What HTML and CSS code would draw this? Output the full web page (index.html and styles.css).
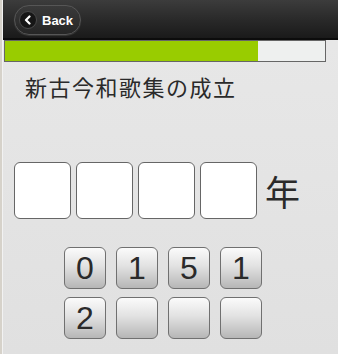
FILE: index.html
```html
<!DOCTYPE html>
<html lang="ja">
<head>
<meta charset="utf-8">
<title>新古今和歌集の成立</title>
<link rel="stylesheet" href="styles.css">
</head>
<body>
<div class="edge"></div>
<div class="app">
  <header class="header">
    <button class="back" type="button">
      <span class="back-icon">
        <svg width="10" height="10" viewBox="0 0 10 10"><path d="M6.5 1.5 L3 5 L6.5 8.5" fill="none" stroke="#fff" stroke-width="2.2" stroke-linecap="round" stroke-linejoin="round"/></svg>
      </span>
      <span class="back-label">Back</span>
    </button>
  </header>
  <div class="progress"><div class="progress-fill" style="width:253px"></div></div>
  <h1 class="title">新古今和歌集の成立</h1>
  <div class="answer">
    <div class="slot"></div>
    <div class="slot"></div>
    <div class="slot"></div>
    <div class="slot"></div>
    <span class="unit">年</span>
  </div>
  <div class="keypad">
    <button class="key" type="button">0</button>
    <button class="key" type="button">1</button>
    <button class="key" type="button">5</button>
    <button class="key" type="button">1</button>
    <button class="key" type="button">2</button>
    <button class="key" type="button"></button>
    <button class="key" type="button"></button>
    <button class="key" type="button"></button>
  </div>
</div>
</body>
</html>
```
FILE: styles.css
```css
html, body {
  margin: 0;
  padding: 0;
  height: 100%;
}
body {
  display: flex;
  background: #e3e3e3;
  font-family: "Liberation Sans", Arial, "Noto Sans CJK JP", sans-serif;
  overflow: hidden;
}
.edge {
  width: 2px;
  flex: none;
  background: #d6d2ca;
  border-right: 1px solid #f2f2f2;
}
.app {
  flex: 1;
  display: flex;
  flex-direction: column;
  background: linear-gradient(#e8e8e8, #e0e0e0);
}
.header {
  height: 38px;
  border-bottom: 2px solid #0c0c0c;
  background: linear-gradient(#3c3c3c, #2a2a2a 50%, #1a1a1a);
  display: flex;
  align-items: flex-start;
  padding: 5px 0 0 11px;
  box-sizing: border-box;
  height: 40px;
}
.back {
  display: flex;
  align-items: center;
  width: 67px;
  height: 30px;
  padding: 0 0 0 4px;
  box-sizing: border-box;
  border: 1px solid #565656;
  border-radius: 15px;
  background: linear-gradient(#3a3a3a, #262626);
  box-shadow: 0 1px 1px rgba(255,255,255,0.12);
  color: #fff;
  font-family: "Liberation Sans", Arial, sans-serif;
  font-weight: bold;
  font-size: 13px;
}
.back-icon {
  width: 18px;
  height: 18px;
  box-sizing: border-box;
  border-radius: 50%;
  background: #161616;
  border: 1px solid #4a4a4a;
  display: flex;
  align-items: center;
  justify-content: center;
}
.back-label {
  margin-left: 5px;
}
.progress {
  margin-left: 1px;
  width: 322px;
  height: 22px;
  box-sizing: border-box;
  border: 1px solid #666;
  background: #eef0ef;
}
.progress-fill {
  height: 100%;
  background: #99cc00;
}
.title {
  margin: 11px 0 0 22px;
  font-family: "Noto Sans CJK JP", sans-serif;
  font-weight: normal;
  font-size: 22px;
  line-height: 26px;
  letter-spacing: 1.5px;
  color: #2a2a2a;
}
.answer {
  display: flex;
  align-items: center;
  gap: 5px;
  margin: 63px 0 0 11px;
}
.slot {
  width: 57px;
  height: 57px;
  box-sizing: border-box;
  border: 1px solid #666;
  border-radius: 6px;
  background: #fff;
}
.unit {
  margin-left: 3px;
  font-family: "Noto Sans CJK JP", sans-serif;
  font-size: 35px;
  line-height: 1;
  color: #2a2a2a;
}
.keypad {
  display: grid;
  grid-template-columns: repeat(4, 42px);
  grid-auto-rows: 42px;
  column-gap: 10px;
  row-gap: 8px;
  margin: 28px 0 0 61px;
}
.key {
  padding: 0;
  border: 1px solid #707070;
  border-radius: 6px;
  background: linear-gradient(#fbfbfb, #e2e2e2 45%, #b6b6b6);
  font-family: "Liberation Sans", Arial, sans-serif;
  font-size: 32px;
  line-height: 40px;
  color: #2a2a2a;
}
```
